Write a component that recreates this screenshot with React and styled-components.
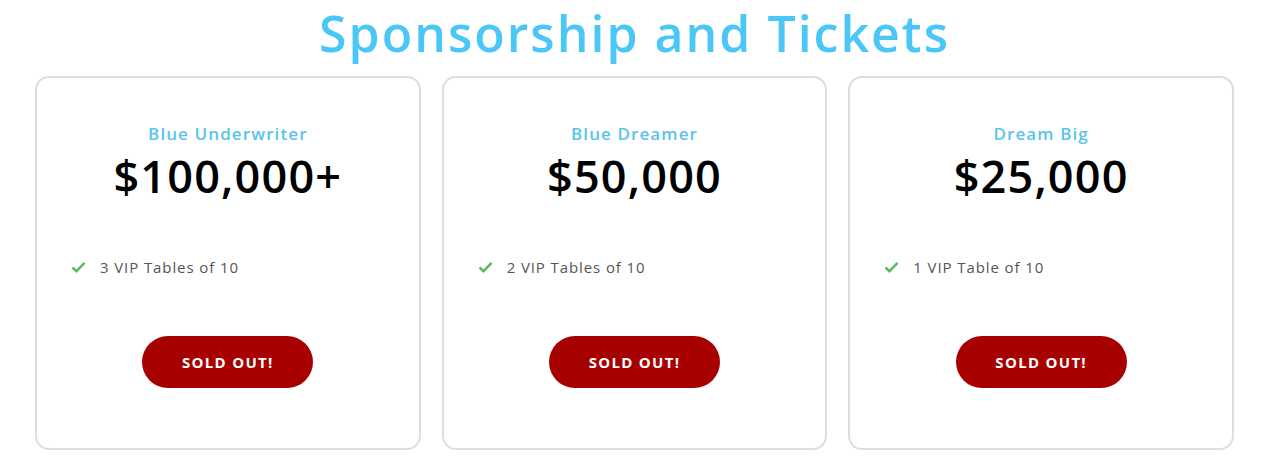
import React from 'react'
import styled, { createGlobalStyle } from 'styled-components'

const GlobalStyle = createGlobalStyle`
  body {
    margin: 0;
    background: #fff;
    font-family: "Open Sans", "Liberation Sans", sans-serif;
  }
`

const tiers = [
  { name: 'Blue Underwriter', price: '$100,000+', perks: ['3 VIP Tables of 10'] },
  { name: 'Blue Dreamer', price: '$50,000', perks: ['2 VIP Tables of 10'] },
  { name: 'Dream Big', price: '$25,000', perks: ['1 VIP Table of 10'] },
]

const Section = styled.section`
  width: 1199px;
  margin: 0 0 0 35px;
  padding-top: 3px;
`

const Title = styled.h1`
  margin: 0 0 13px;
  text-align: center;
  font-size: 50px;
  line-height: 60px;
  font-weight: 600;
  letter-spacing: 2px;
  color: #4ac7f7;
`

const Cards = styled.div`
  display: grid;
  grid-template-columns: repeat(3, 1fr);
  gap: 21px;
`

const Card = styled.div`
  height: 374px;
  box-sizing: border-box;
  border: 2px solid #dedede;
  border-radius: 14px;
  display: flex;
  flex-direction: column;
  padding: 45px 34px 0;
`

const TierName = styled.div`
  text-align: center;
  font-size: 17px;
  line-height: 22px;
  font-weight: 600;
  letter-spacing: 1.1px;
  color: #5ac3ee;
`

const Price = styled.div`
  text-align: center;
  font-size: 45px;
  line-height: 50px;
  font-weight: 600;
  letter-spacing: 1.2px;
  color: #000;
  margin-top: 6px;
`

const Perks = styled.ul`
  list-style: none;
  margin: 56px 0 0;
  padding: 0;
  height: 60px;
`

const Perk = styled.li`
  display: flex;
  align-items: center;
  gap: 14px;
  font-size: 15px;
  line-height: 20px;
  letter-spacing: 0.9px;
  color: #555;
`

const Button = styled.button`
  align-self: center;
  margin-top: 19px;
  width: 171px;
  height: 52px;
  border: none;
  border-radius: 26px;
  background: #a70000;
  color: #fff;
  font-family: inherit;
  font-size: 15px;
  font-weight: 700;
  letter-spacing: 1.3px;
  cursor: pointer;
`

const Check = () => (
  <svg width="15" height="12" viewBox="0 0 15 12">
    <path d="M1.5 6.5 L5.5 10.2 L13.5 1.8" fill="none" stroke="#5cb85c" strokeWidth="2.4" />
  </svg>
)

export default function App() {
  return (
    <>
      <GlobalStyle />
      <Section>
        <Title>Sponsorship and Tickets</Title>
        <Cards>
          {tiers.map((t) => (
            <Card key={t.name}>
              <TierName>{t.name}</TierName>
              <Price>{t.price}</Price>
              <Perks>
                {t.perks.map((p) => (
                  <Perk key={p}>
                    <Check />
                    {p}
                  </Perk>
                ))}
              </Perks>
              <Button>SOLD OUT!</Button>
            </Card>
          ))}
        </Cards>
      </Section>
    </>
  )
}
